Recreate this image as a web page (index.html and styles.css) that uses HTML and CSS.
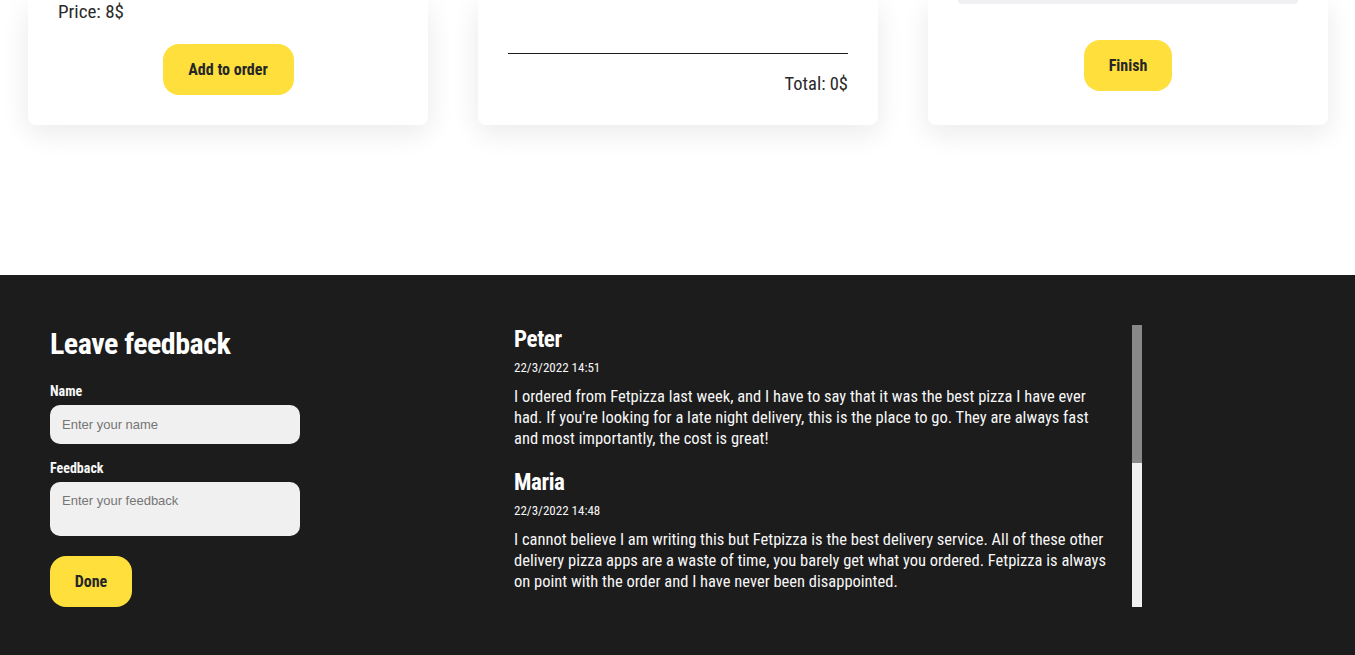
FILE: index.html
```html
<!DOCTYPE html>
<html lang="en">
<head>
<meta charset="utf-8">
<title>Fetpizza</title>
<link rel="stylesheet" href="styles.css">
</head>
<body>
<section class="order">
  <div class="cards">
    <div class="card card-menu">
      <p class="price">Price: 8$</p>
      <div class="center"><button class="btn btn-add">Add to order</button></div>
    </div>
    <div class="card card-summary">
      <hr class="rule">
      <p class="total">Total: 0$</p>
    </div>
    <div class="card card-checkout">
      <div class="field-tail"></div>
      <div class="center"><button class="btn btn-finish">Finish</button></div>
    </div>
  </div>
</section>
<footer class="feedback">
  <form class="form">
    <h2 class="form-title">Leave feedback</h2>
    <label class="label" for="name">Name</label>
    <input class="input" id="name" type="text" placeholder="Enter your name">
    <label class="label" for="fb">Feedback</label>
    <textarea class="input textarea" id="fb" placeholder="Enter your feedback"></textarea>
    <button class="btn btn-done" type="button">Done</button>
  </form>
  <div class="reviews-box">
    <div class="reviews">
      <article class="review">
        <h3 class="review-name">Peter</h3>
        <div class="review-date">22/3/2022 14:51</div>
        <p class="review-text">I ordered from Fetpizza last week, and I have to say that it was the best pizza I have ever had. If you're looking for a late night delivery, this is the place to go. They are always fast and most importantly, the cost is great!</p>
      </article>
      <article class="review">
        <h3 class="review-name">Maria</h3>
        <div class="review-date">22/3/2022 14:48</div>
        <p class="review-text">I cannot believe I am writing this but Fetpizza is the best delivery service. All of these other delivery pizza apps are a waste of time, you barely get what you ordered. Fetpizza is always on point with the order and I have never been disappointed.</p>
      </article>
    </div>
    <div class="scrollbar"><div class="scrollbar-thumb"></div></div>
  </div>
</footer>
</body>
</html>
```
FILE: styles.css
```css
* { box-sizing: border-box; }
html, body { margin: 0; padding: 0; }
body {
  font-family: "Roboto Condensed", "Open Sans", sans-serif;
  color: #222;
  background: #fff;
  overflow: hidden;
}
.order {
  height: 275px;
  background: #fff;
}
.cards {
  display: flex;
  gap: 50px;
  padding: 0 27px 0 28px;
}
.card {
  width: 400px;
  height: 125px;
  background: #fff;
  border-radius: 0 0 8px 8px;
  box-shadow: 0 8px 28px rgba(20, 20, 40, 0.09);
  padding: 0 30px;
  display: flex;
  flex-direction: column;
}
.center { display: flex; justify-content: center; }
.price {
  margin: 0;
  font-size: 19px;
  line-height: 23px;
  color: #2a2a2a;
}
.btn {
  font-family: inherit;
  font-weight: bold;
  font-size: 16px;
  color: #262626;
  background: #ffdf3c;
  border: none;
  border-radius: 16px;
  height: 51px;
  padding: 0;
  cursor: pointer;
}
.btn-add { margin-top: 21px; width: 131px; }
.rule {
  margin: 53px 0 0;
  border: none;
  border-top: 1px solid #1c1c1c;
  height: 0;
}
.total {
  margin: 19px 0 0;
  text-align: right;
  font-size: 18.5px;
  line-height: 23px;
  color: #2a2a2a;
}
.field-tail {
  height: 4px;
  background: #f0f0f2;
  border-radius: 0 0 10px 10px;
}
.btn-finish { margin-top: 36px; width: 88px; }

.feedback {
  height: 380px;
  background: #1c1c1c;
  color: #f7f7f7;
  display: flex;
  padding: 50px 0 0 50px;
}
.form {
  width: 464px;
  display: flex;
  flex-direction: column;
  align-items: flex-start;
}
.form-title {
  margin: 0;
  font-size: 30px;
  line-height: 38px;
  font-weight: bold;
  color: #fff;
  letter-spacing: -0.5px;
}
.label {
  font-size: 14px;
  font-weight: bold;
  line-height: 18px;
}
.form-title + .label { margin-top: 19px; }
.input {
  margin-top: 5px;
  width: 250px;
  height: 39px;
  border: none;
  border-radius: 10px;
  background: #f0f0f0;
  padding: 0 12px;
  font-family: "Liberation Sans", Arial, sans-serif;
  font-size: 13px;
  color: #333;
  outline: none;
}
.input::placeholder { color: #757575; }
.input + .label { margin-top: 15px; }
.textarea {
  height: 54px;
  padding: 11px 12px;
  resize: none;
  display: block;
}
.btn-done { margin-top: 20px; width: 82px; }

.reviews-box {
  display: flex;
  height: 282px;
}
.reviews {
  width: 618px;
  height: 282px;
  overflow: hidden;
}
.review { width: 595px; margin-bottom: 19px; }
.review-name {
  margin: 0;
  font-size: 23px;
  line-height: 30px;
  font-weight: bold;
  color: #fff;
  letter-spacing: -0.4px;
}
.review-date {
  margin-top: 4px;
  font-size: 13px;
  line-height: 18px;
}
.review-text {
  margin: 9px 0 0;
  font-size: 16.5px;
  line-height: 21px;
}
.scrollbar {
  width: 10px;
  height: 282px;
  background: #f1f1f1;
}
.scrollbar-thumb {
  height: 138px;
  background: #888;
}
```
